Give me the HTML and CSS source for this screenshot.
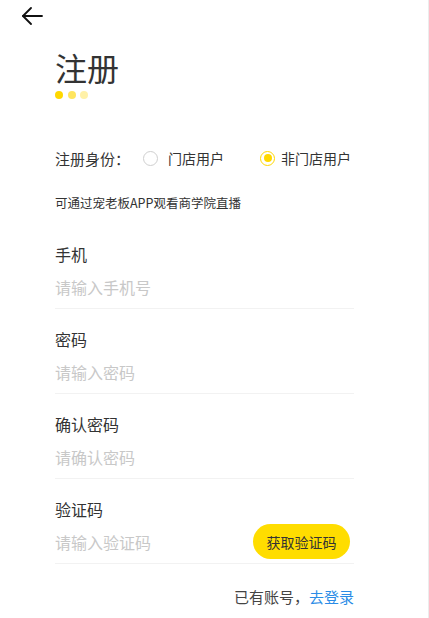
FILE: index.html
```html
<!DOCTYPE html>
<html lang="zh-CN">
<head>
    <meta charset="UTF-8">
    <meta name="viewport" content="width=device-width, initial-scale=1.0">
    <title>注册</title>
    <link rel="stylesheet" href="styles.css">
</head>
<body>
    <div class="screen">
        <a class="back" href="#">
            <svg width="22" height="18" viewBox="0 0 22 18" fill="none" stroke="#111" stroke-width="1.8" stroke-linecap="round" stroke-linejoin="round">
                <path d="M21 9 H2"/>
                <path d="M10 1 L2 9 L10 17"/>
            </svg>
        </a>

        <div class="page">
            <h1 class="title">注册</h1>
            <div class="dots">
                <span class="dot dot-1"></span>
                <span class="dot dot-2"></span>
                <span class="dot dot-3"></span>
            </div>

            <div class="identity">
                <span class="identity-label">注册身份：</span>
                <label class="radio">
                    <span class="radio-circle"></span>
                    <span>门店用户</span>
                </label>
                <label class="radio checked">
                    <span class="radio-circle"></span>
                    <span>非门店用户</span>
                </label>
            </div>

            <p class="notice">可通过宠老板APP观看商学院直播</p>

            <div class="field">
                <div class="field-label">手机</div>
                <div class="field-row">
                    <input type="text" placeholder="请输入手机号">
                </div>
            </div>

            <div class="field">
                <div class="field-label">密码</div>
                <div class="field-row">
                    <input type="password" placeholder="请输入密码">
                </div>
            </div>

            <div class="field">
                <div class="field-label">确认密码</div>
                <div class="field-row">
                    <input type="password" placeholder="请确认密码">
                </div>
            </div>

            <div class="field">
                <div class="field-label">验证码</div>
                <div class="field-row">
                    <input type="text" placeholder="请输入验证码">
                    <button type="button" class="code-btn">获取验证码</button>
                </div>
            </div>

            <p class="login-link">已有账号，<a href="#">去登录</a></p>
        </div>
    </div>
</body>
</html>
```

FILE: styles.css
```css
* {
    margin: 0;
    padding: 0;
    box-sizing: border-box;
}

body {
    font-family: "Noto Sans CJK SC", "Noto Sans", sans-serif;
    background: #fff;
    color: #333;
}

.screen {
    width: 429px;
    min-height: 618px;
    border-right: 1px solid #ececec;
}

.back {
    display: block;
    padding: 7px 0 0 21px;
    height: 25px;
}

.back svg {
    display: block;
}

.page {
    width: 354px;
    padding-left: 55px;
}

.title {
    font-size: 32px;
    line-height: 32px;
    font-weight: 400;
    color: #333;
    margin-top: 26px;
}

.dots {
    display: flex;
    gap: 4.5px;
    margin-top: 8px;
}

.dot {
    width: 8px;
    height: 8px;
    border-radius: 50%;
}

.dot-1 {
    background: #ffd800;
}

.dot-2 {
    background: #ffe55e;
}

.dot-3 {
    background: #fff1a8;
}

.identity {
    display: flex;
    align-items: center;
    height: 22px;
    margin-top: 48px;
    white-space: nowrap;
}

.identity > * {
    flex-shrink: 0;
}

.identity-label {
    font-size: 15px;
    margin-right: 13px;
}

.radio {
    display: flex;
    align-items: center;
    gap: 10px;
    font-size: 14px;
    color: #333;
    margin-right: 36px;
}

.radio-circle {
    flex-shrink: 0;
    width: 15px;
    height: 15px;
    border-radius: 50%;
    border: 1px solid #cfcfcf;
    display: flex;
    align-items: center;
    justify-content: center;
}

.radio.checked {
    gap: 6px;
    margin-right: 0;
}

.radio.checked .radio-circle {
    border: 1.5px solid #ffd800;
}

.radio.checked .radio-circle::after {
    content: "";
    width: 8px;
    height: 8px;
    border-radius: 50%;
    background: #ffd800;
}

.notice {
    font-size: 12.5px;
    line-height: 18px;
    margin-top: 25px;
    margin-bottom: 12px;
}

.field {
    padding-top: 19px;
}

.field-label {
    font-size: 16px;
    line-height: 22px;
    color: #333;
}

.field-row {
    display: flex;
    align-items: center;
    height: 44px;
    border-bottom: 1px solid #f2f2f2;
}

.field-row input {
    flex: 1;
    min-width: 0;
    height: 40px;
    border: none;
    outline: none;
    font-family: inherit;
    font-size: 16px;
    color: #333;
    background: transparent;
}

.field-row input::placeholder {
    color: #c8c8c8;
}

.code-btn {
    width: 97px;
    height: 35px;
    margin-right: 4px;
    border: none;
    border-radius: 18px;
    background: #ffdd00;
    font-family: inherit;
    font-size: 14px;
    color: #333;
    cursor: pointer;
}

.login-link {
    text-align: right;
    font-size: 15px;
    line-height: 22px;
    color: #444;
    margin-top: 22px;
}

.login-link a {
    color: #2b8ce6;
    text-decoration: none;
}
```
